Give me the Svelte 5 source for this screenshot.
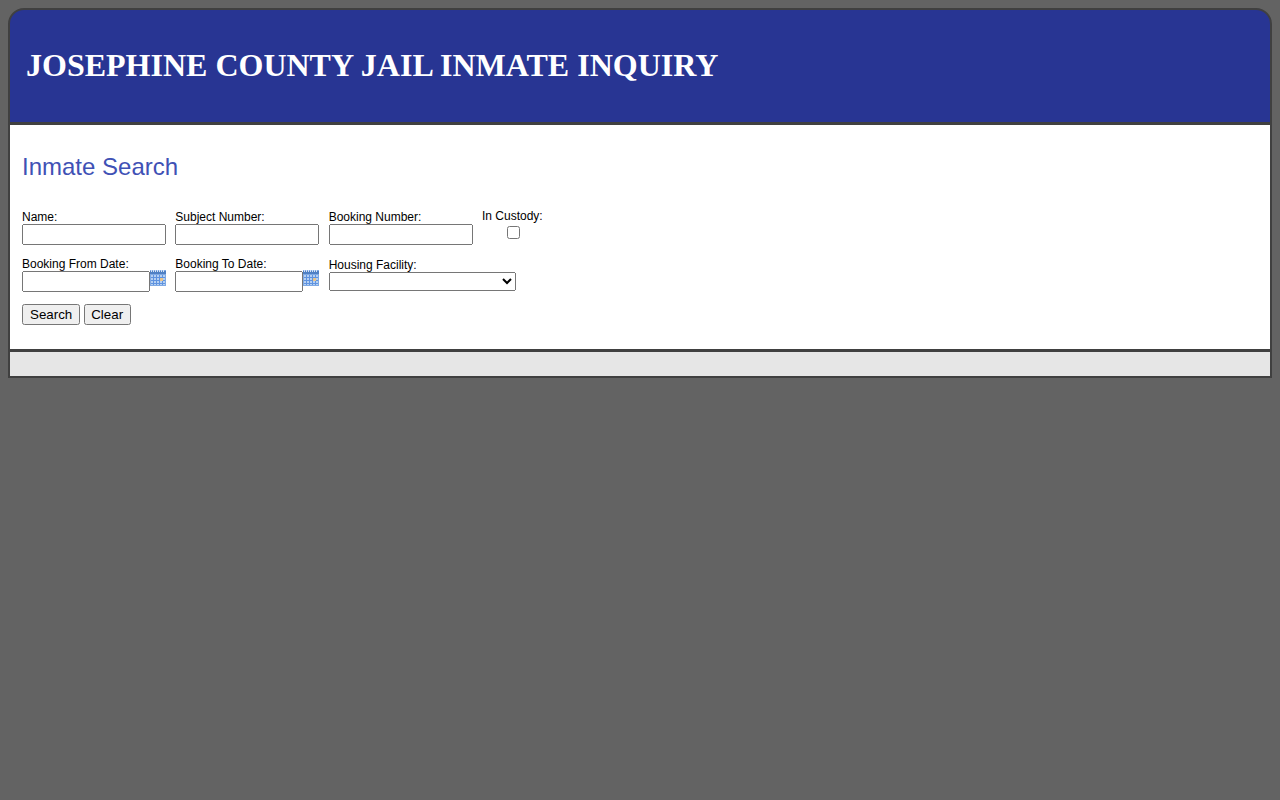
<script>
    const calendarCols = [3, 6, 9, 12];
    const calendarRows = [7, 10, 13];
    const ticks = [1, 3, 5, 7, 9, 11, 13];
</script>

{#snippet calendar()}
    <svg class="cal" width="16" height="16" viewBox="0 0 16 16" aria-hidden="true">
        <rect x="0" y="0" width="16" height="16" fill="#7ea9e4" />
        <rect x="0" y="1" width="16" height="3" fill="#4f80c4" />
        {#each ticks as t}
            <rect x={t} y="0" width="1" height="2" fill="#d5e3f5" />
        {/each}
        <rect x="1" y="5" width="14" height="10" fill="#b5d0f2" />
        {#each calendarCols as c}
            <rect x={c} y="5" width="1" height="10" fill="#5f93e0" />
        {/each}
        {#each calendarRows as r}
            <rect x="1" y={r} width="14" height="1" fill="#5f93e0" />
        {/each}
        <rect x="10" y="8" width="3" height="3" fill="#e8c48a" />
    </svg>
{/snippet}

<div class="page">
    <header class="banner">
        <h1>JOSEPHINE COUNTY JAIL INMATE INQUIRY</h1>
    </header>

    <main class="content">
        <h2>Inmate Search</h2>
        <form class="search" onsubmit={(e) => e.preventDefault()}>
            <div class="row">
                <div class="field">
                    <label for="name">Name:</label>
                    <input id="name" type="text" />
                </div>
                <div class="field">
                    <label for="subject">Subject Number:</label>
                    <input id="subject" type="text" />
                </div>
                <div class="field">
                    <label for="booking">Booking Number:</label>
                    <input id="booking" type="text" />
                </div>
                <div class="field custody">
                    <label for="custody">In Custody:</label>
                    <input id="custody" type="checkbox" />
                </div>
            </div>

            <div class="row second">
                <div class="field">
                    <label for="from">Booking From Date:</label>
                    <div class="date">
                        <input id="from" type="text" />
                        {@render calendar()}
                    </div>
                </div>
                <div class="field">
                    <label for="to">Booking To Date:</label>
                    <div class="date">
                        <input id="to" type="text" />
                        {@render calendar()}
                    </div>
                </div>
                <div class="field housing">
                    <label for="facility">Housing Facility:</label>
                    <select id="facility"><option></option></select>
                </div>
            </div>

            <div class="buttons">
                <button type="submit">Search</button>
                <button type="button" class="clear">Clear</button>
            </div>
        </form>
    </main>

    <footer class="foot"></footer>
</div>

<style>
    :global(body) {
        background-color: #636363;
        font-family: "Liberation Sans", Arial, sans-serif;
    }

    .page {
        padding: 8px;
    }

    .banner {
        display: flex;
        align-items: center;
        height: 110px;
        padding: 0 0 2px 16px;
        background-color: #283593;
        border: 2px solid #404040;
        border-bottom-width: 3px;
        border-radius: 16px 16px 0 0;
    }

    h1 {
        margin: 0;
        color: #ffffff;
        font-family: "Liberation Serif", "Times New Roman", serif;
        font-size: 32px;
        font-weight: bold;
    }

    .content {
        height: 224px;
        padding: 0 12px;
        background-color: #ffffff;
        border-left: 2px solid #404040;
        border-right: 2px solid #404040;
        border-bottom: 3px solid #404040;
    }

    h2 {
        margin: 0;
        padding-top: 28px;
        height: 57px;
        color: #3f51b5;
        font-size: 24px;
        font-weight: normal;
        line-height: 28px;
    }

    .row {
        display: flex;
        gap: 9.33px;
    }

    .second {
        margin-top: 12px;
    }

    .field {
        display: flex;
        flex-direction: column;
        width: 144px;
    }

    label {
        color: #000000;
        font-size: 12px;
        line-height: 14px;
    }

    input[type="text"] {
        box-sizing: border-box;
        width: 144px;
        height: 21px;
        margin: 0;
    }

    .custody {
        width: auto;
        align-items: center;
        margin-top: -1px;
    }

    .custody input {
        margin: 3px 0 0 2px;
    }

    .date {
        display: flex;
        align-items: flex-start;
    }

    .date input[type="text"] {
        width: 128px;
    }

    .cal {
        display: block;
        margin-top: -1px;
    }

    .housing {
        width: 187px;
        margin-top: 1px;
    }

    select {
        width: 187px;
        height: 19px;
        margin: 0;
    }

    .buttons {
        display: flex;
        gap: 3.5px;
        margin-top: 12px;
    }

    button {
        height: 21px;
        margin: 0;
        padding: 1px 6px;
        font-family: "Liberation Sans", Arial, sans-serif;
        font-size: 13.33px;
    }

    .clear {
        padding: 1px 5.5px;
    }

    .foot {
        height: 24px;
        background-color: #e6e6e6;
        border-left: 2px solid #404040;
        border-right: 2px solid #404040;
        border-bottom: 2px solid #404040;
    }
</style>
